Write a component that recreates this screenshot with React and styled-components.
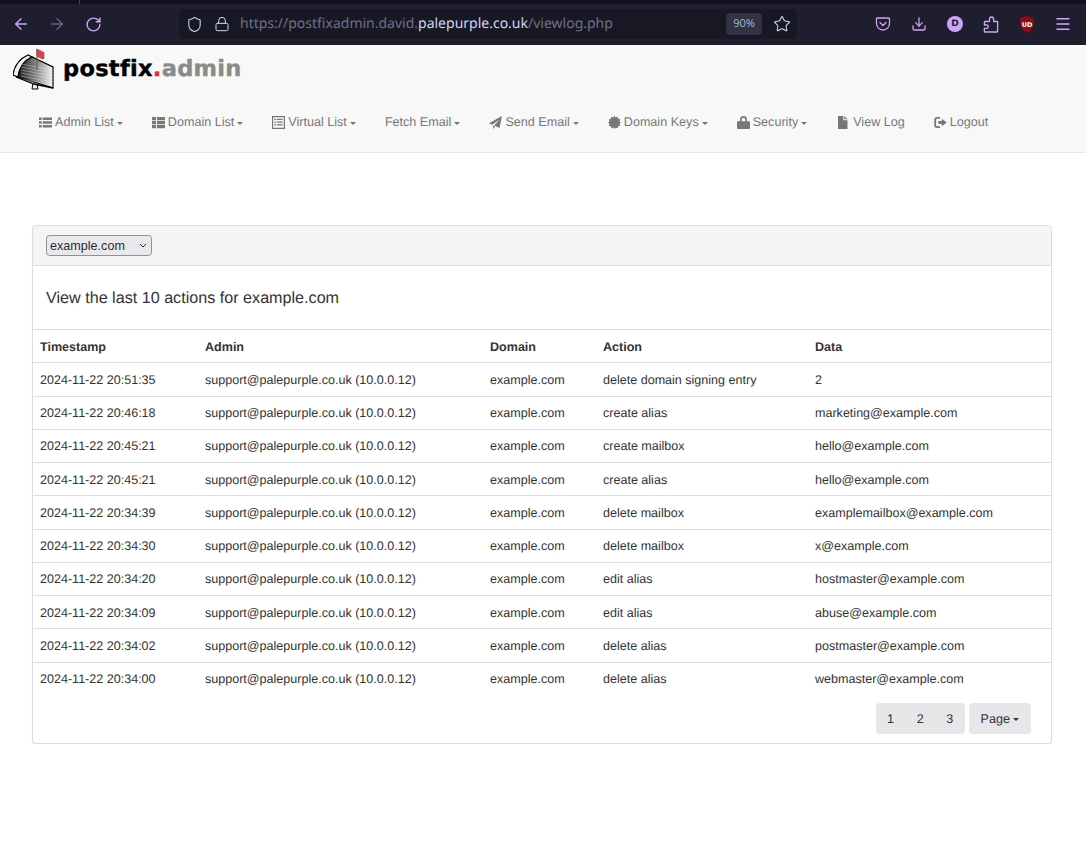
import React from 'react';
import styled, { createGlobalStyle } from 'styled-components';
import { ArrowLeft, ArrowRight, RotateCw, Shield, Lock, Star, Download, Menu } from 'lucide-react';

const GlobalStyle = createGlobalStyle`
  html, body { margin: 0; padding: 0; background: #fff; }
  body {
    font-family: "Liberation Sans", Arial, sans-serif;
    font-size: 12.6px;
    line-height: 18px;
    color: #333;
    text-rendering: geometricPrecision;
  }
`;

const BrowserFrame = styled.div`
  background: #1e1e2e;
  height: 45px;
  display: flex;
  flex-direction: column;
`;

const TabStrip = styled.div`
  height: 4px;
  background: #11111b;
  padding-left: 79px;
`;

const TabDivider = styled.div`
  width: 1px;
  height: 4px;
  background: #45475a;
`;

const Toolbar = styled.div`
  flex: 1;
  display: flex;
  align-items: center;
  padding: 0 5px 1px 3px;
`;

const ToolButton = styled.div`
  width: 36px;
  height: 36px;
  flex: none;
  display: flex;
  align-items: center;
  justify-content: center;
  color: ${p => (p.$dim ? '#6f5b8c' : '#cba6f7')};
`;

const NavGroup = styled.div`
  display: flex;
  margin-right: ${p => p.$gap || 0}px;
`;

const UrlBar = styled.div`
  width: 618px;
  height: 30px;
  flex: none;
  background: #181825;
  border-radius: 4px;
  display: flex;
  align-items: center;
  padding: 0 1px 0 1px;
  box-sizing: border-box;
  margin-right: 68px;
  color: #cdd6f4;
`;

const UrlIcon = styled.span`
  width: 28px;
  display: flex;
  justify-content: center;
  flex: none;
`;

const UrlText = styled.div`
  flex: 1;
  font-family: "Noto Sans", sans-serif;
  font-size: 14px;
  color: #6c7086;
  white-space: nowrap;
  padding-left: 4px;
`;

const UrlHost = styled.span`
  color: #cdd6f4;
`;

const ZoomBadge = styled.div`
  width: 36px;
  height: 22px;
  background: #313244;
  border-radius: 4px;
  font-family: "Noto Sans", sans-serif;
  font-size: 11px;
  line-height: 22px;
  text-align: center;
  color: #a6adc8;
  margin-right: 6px;
`;

const StarButton = styled.span`
  width: 28px;
  display: flex;
  justify-content: center;
`;

const AccountBadge = styled.div`
  width: 16px;
  height: 16px;
  border-radius: 50%;
  background: #cba6f7;
  color: #1e1e2e;
  font-family: "DejaVu Sans", sans-serif;
  font-weight: 700;
  font-size: 9px;
  line-height: 16px;
  text-align: center;
`;

const Navbar = styled.header`
  height: 107px;
  background: #f8f8f8;
  border-bottom: 1px solid #e7e7e7;
  display: flex;
  flex-direction: column;
`;

const Brand = styled.div`
  height: 54px;
  display: flex;
  align-items: flex-start;
  padding: 2px 0 0 13px;
  gap: 8px;
`;

const Wordmark = styled.div`
  font-family: "DejaVu Sans", sans-serif;
  font-weight: 700;
  font-size: 22.5px;
  line-height: 40px;
  letter-spacing: 0.3px;
  color: #000;
  margin-top: 2px;
  -webkit-text-stroke: 0.4px currentColor;
`;

const Dot = styled.span`
  color: #e0312e;
`;

const WordmarkFade = styled.span`
  color: #8a8a8a;
`;

const NavList = styled.nav`
  display: flex;
  align-items: center;
  gap: 29px;
  padding: 12px 0 0 39px;
`;

const NavItem = styled.div`
  display: flex;
  align-items: center;
  color: #777;
  white-space: nowrap;
  height: 18px;
`;

const NavIcon = styled.svg`
  width: 13px;
  height: 13px;
  margin-right: ${p => p.$gap || 3}px;
  fill: #777;
  flex: none;
`;

const Caret = styled.span`
  display: inline-block;
  width: 0;
  height: 0;
  margin-left: 3px;
  margin-top: 2px;
  border-top: 3.6px solid currentColor;
  border-left: 3.6px solid transparent;
  border-right: 3.6px solid transparent;
`;

const Panel = styled.section`
  margin: 72px 34px 0 32px;
  background: #fff;
  border: 1px solid #ddd;
  border-radius: 3.6px;
  box-shadow: 0 1px 1px rgba(0, 0, 0, 0.1);
`;

const PanelHeading = styled.div`
  height: 39px;
  background: #f5f5f5;
  border-bottom: 1px solid #ddd;
  display: flex;
  align-items: center;
  padding-left: 13px;
  border-radius: 3px 3px 0 0;
`;

const SelectWrap = styled.div`
  position: relative;
  width: 106px;
  height: 21px;
`;

const DomainSelect = styled.select`
  appearance: none;
  width: 100%;
  height: 100%;
  font-family: "Liberation Sans", Arial, sans-serif;
  font-size: 12.6px;
  color: #2b2a33;
  background-color: #e9e9ed;
  border: 1px solid #8f8f9d;
  border-radius: 3.6px;
  padding: 0 0 0 3px;
`;

const SelectChevron = styled.svg`
  position: absolute;
  right: 5px;
  top: 8px;
  width: 8px;
  height: 5px;
  pointer-events: none;
`;

const PanelTitle = styled.div`
  height: 63px;
  box-sizing: border-box;
  display: flex;
  align-items: center;
  padding: 1px 0 0 13px;
  font-size: 16.15px;
`;

const LogTable = styled.table`
  width: 100%;
  border-collapse: collapse;
  table-layout: fixed;
  font-size: 12.55px;
`;

const HeadCell = styled.th`
  width: ${p => p.$w};
  text-align: left;
  font-weight: 700;
  height: 33.3px;
  padding: 1px 0 0 7px;
  border-top: 1px solid #ddd;
  border-bottom: 1px solid #ddd;
  box-sizing: border-box;
`;

const Row = styled.tr`
  height: 33.25px;
`;

const Cell = styled.td`
  padding: 1px 0 0 7px;
  border-top: 1px solid #ddd;
  box-sizing: border-box;
  white-space: nowrap;
`;

const PanelFooter = styled.div`
  height: 48.2px;
  display: flex;
  justify-content: flex-end;
  align-items: flex-start;
  gap: 4px;
  padding: 8px 20px 0 0;
  box-sizing: border-box;
`;

const PageGroup = styled.div`
  height: 31px;
  background: #e7e7ea;
  border-radius: 3.6px;
  display: flex;
  align-items: center;
  padding: ${p => (p.$pad ? '0 12px' : '0')};
`;

const PageNumber = styled.span`
  width: 29.6px;
  text-align: center;
`;

const rows = [
  ['2024-11-22 20:51:35', 'delete domain signing entry', '2'],
  ['2024-11-22 20:46:18', 'create alias', 'marketing@example.com'],
  ['2024-11-22 20:45:21', 'create mailbox', 'hello@example.com'],
  ['2024-11-22 20:45:21', 'create alias', 'hello@example.com'],
  ['2024-11-22 20:34:39', 'delete mailbox', 'examplemailbox@example.com'],
  ['2024-11-22 20:34:30', 'delete mailbox', 'x@example.com'],
  ['2024-11-22 20:34:20', 'edit alias', 'hostmaster@example.com'],
  ['2024-11-22 20:34:09', 'edit alias', 'abuse@example.com'],
  ['2024-11-22 20:34:02', 'delete alias', 'postmaster@example.com'],
  ['2024-11-22 20:34:00', 'delete alias', 'webmaster@example.com'],
];

// 12 point burst for the domain keys icon
const burst = Array.from({ length: 24 }, (_, i) => {
  const r = i % 2 ? 5.2 : 6.5;
  const a = (i * Math.PI) / 12;
  return `${(6.5 + r * Math.cos(a)).toFixed(2)} ${(6.5 + r * Math.sin(a)).toFixed(2)}`;
}).join('L');

const icons = {
  list: 'M0 1.500h2.700v2.500H0zM3.700 1.500H13v2.500H3.700zM0 5.250h2.700v2.500H0zM3.700 5.250H13v2.500H3.700zM0 9h2.700v2.500H0zM3.700 9H13v2.500H3.700z',
  th: 'M0 1h4v3.200H0zM5 1h8v3.200H5zM0 5h4v3.200H0zM5 5h8v3.200H5zM0 9h4v3.200H0zM5 9h8v3.200H5z',
  alt: 'M0 0h13v13H0zM1.200 1.200v10.600h10.600V1.200zM2.300 2.800h1.600V4H2.300zM4.800 2.800h5.900V4H4.800zM2.300 5.500h1.600v1.200H2.300zM4.800 5.500h5.900v1.200H4.800zM2.300 8.200h1.600v1.200H2.300zM4.800 8.200h5.900v1.200H4.800z',
  send: 'M13 0 0 7.200l3.300 1.500L10.500 3.500 5.200 9.600l5.300 2.400zM4 9.500V13l2.200-2.500z',
  cert: `M${burst}Z`,
  lock: 'M1 5.200h2V3.500a3.500 3.500 0 0 1 7 0v1.700h2c.5 0 1 .4 1 1V12c0 .6-.5 1-1 1H1c-.5 0-1-.4-1-1V6.200c0-.6.5-1 1-1zM4.700 5.200h3.600V3.500a1.800 1.800 0 0 0-3.600 0z',
  file: 'M2 0h5.300v4.300h4.200V13H2zM8.300 0l3.200 3.300H8.300z',
  out: 'M6 1H3C1.200 1 .3 2.100.3 3.700v5.600C.3 10.900 1.200 12 3 12h3v-1.800H3.200c-.8 0-1.100-.4-1.100-1.100V3.900c0-.7.3-1.100 1.100-1.100H6zM7.800 2.700l5 3.800-5 3.800V8H4.300V5h3.500z',
};

const stripes = [0, 3, 6, 9, 12, 15, 18];

const MailboxLogo = () => (
  <svg width="42" height="45" viewBox="0 0 42 45" style={{ flex: 'none' }}>
    <defs>
      <linearGradient id="boxShade" x1="0" y1="0" x2="1" y2="0">
        <stop offset="0" stopColor="#1c1c1c" />
        <stop offset="0.55" stopColor="#8c8c8c" />
        <stop offset="1" stopColor="#f4f4f4" />
      </linearGradient>
    </defs>
    <path d="M0 28C1 20 6 12 15 8l4 2C10 14 6 22 5 30z" fill="#eee" stroke="#000" strokeWidth="1.200" />
    <path d="M5 30C6 22 10 14 19 10L40 20v21z" fill="url(#boxShade)" stroke="#000" strokeWidth="1.200" />
    {stripes.map(y => (
      <path key={y} d={`M8 ${17 + y}L40 ${23 + y}`} stroke="#fff" strokeOpacity=".45" strokeWidth=".7" />
    ))}
    <path d="M24 2v21" stroke="#666" strokeWidth="1.300" />
    <path d="M24 2l7 3.500V12l-4-1-3-2z" fill="#d9444a" stroke="#8a2a2e" strokeWidth=".5" />
    <path d="M20 36l-1 6h6l-1-5" fill="#eee" stroke="#000" strokeWidth="1" />
    <path d="M3 30l18 7 19 4" fill="none" stroke="#000" strokeWidth="1.300" />
  </svg>
);

const PocketIcon = () => (
  <svg width="16" height="16" viewBox="0 0 16 16" fill="none" stroke="currentColor" strokeWidth="1.300">
    <path d="M2.500 2h11c.6 0 1 .4 1 1v4.500a6.500 6.500 0 0 1-13 0V3c0-.6.4-1 1-1z" />
    <path d="M5 6.500 8 9.500l3-3" strokeLinecap="round" />
  </svg>
);

const PuzzleIcon = () => (
  <svg width="16" height="17" viewBox="0 0 16 17" fill="none" stroke="currentColor" strokeWidth="1.300" strokeLinejoin="round">
    <path d="M6.500 5.500V3.200C6.500 2 7.400 1 8.600 1s2 1 2 2.200v2.300h3.400c.4 0 .6.200.6.600V15.500c0 .3-.3.500-.6.500H2c-.4 0-.6-.2-.6-.6v-3.100h2.200c1 0 1.700-.6 1.700-1.600S4.600 9 3.600 9H1.400V6c0-.3.2-.5.6-.5z" />
  </svg>
);

const UblockIcon = () => (
  <svg width="16" height="17" viewBox="0 0 16 17">
    <path d="M8 0l7 2c0 7 0 11-7 15C1 13 1 9 1 2z" fill="#8b0d13" />
    <text x="8" y="10.500" textAnchor="middle" fontSize="6.500" fontWeight="700" fontFamily="DejaVu Sans" fill="#fff">UD</text>
  </svg>
);

const NavEntry = ({ icon, label, caret, gap }) => (
  <NavItem>
    {icon && (
      <NavIcon viewBox="0 0 13 13" $gap={gap}>
        <path fillRule="evenodd" d={icons[icon]} />
      </NavIcon>
    )}
    {label}
    {caret && <Caret />}
  </NavItem>
);

export default function App() {
  return (
    <>
      <GlobalStyle />
      <BrowserFrame>
        <TabStrip><TabDivider /></TabStrip>
        <Toolbar>
          <NavGroup $gap={68}>
            <ToolButton><ArrowLeft size={18} strokeWidth={1.9} /></ToolButton>
            <ToolButton $dim><ArrowRight size={18} strokeWidth={1.9} /></ToolButton>
            <ToolButton><RotateCw size={17} strokeWidth={2} /></ToolButton>
          </NavGroup>
          <UrlBar>
            <UrlIcon><Shield size={17} strokeWidth={1.5} /></UrlIcon>
            <UrlIcon><Lock size={16} strokeWidth={1.5} /></UrlIcon>
            <UrlText>https://postfixadmin.david.<UrlHost>palepurple.co.uk</UrlHost>/viewlog.php</UrlText>
            <ZoomBadge>90%</ZoomBadge>
            <StarButton><Star size={18} strokeWidth={1.4} /></StarButton>
          </UrlBar>
          <ToolButton><PocketIcon /></ToolButton>
          <ToolButton><Download size={16} strokeWidth={1.9} /></ToolButton>
          <ToolButton><AccountBadge>D</AccountBadge></ToolButton>
          <ToolButton><PuzzleIcon /></ToolButton>
          <ToolButton><UblockIcon /></ToolButton>
          <ToolButton><Menu size={18} strokeWidth={1.8} /></ToolButton>
        </Toolbar>
      </BrowserFrame>

      <Navbar>
        <Brand>
          <MailboxLogo />
          <Wordmark>postfix<Dot>.</Dot><WordmarkFade>admin</WordmarkFade></Wordmark>
        </Brand>
        <NavList>
          <NavEntry icon="list" label="Admin List" caret />
          <NavEntry icon="th" label="Domain List" caret />
          <NavEntry icon="alt" label="Virtual List" caret />
          <NavEntry label="Fetch Email" caret />
          <NavEntry icon="send" label="Send Email" caret />
          <NavEntry icon="cert" label="Domain Keys" caret />
          <NavEntry icon="lock" label="Security" caret />
          <NavEntry icon="file" label="View Log" gap={4} />
          <NavEntry icon="out" label="Logout" />
        </NavList>
      </Navbar>

      <Panel>
        <PanelHeading>
          <SelectWrap>
            <DomainSelect defaultValue="example.com">
              <option>example.com</option>
            </DomainSelect>
            <SelectChevron viewBox="0 0 8 5">
              <path d="M1 1l3 3 3-3" fill="none" stroke="#2b2a33" strokeWidth="1" />
            </SelectChevron>
          </SelectWrap>
        </PanelHeading>
        <PanelTitle>View the last 10 actions for example.com</PanelTitle>
        <LogTable>
          <thead>
            <tr>
              <HeadCell $w="165px">Timestamp</HeadCell>
              <HeadCell $w="285px">Admin</HeadCell>
              <HeadCell $w="113px">Domain</HeadCell>
              <HeadCell $w="212px">Action</HeadCell>
              <HeadCell>Data</HeadCell>
            </tr>
          </thead>
          <tbody>
            {rows.map(([time, action, data], i) => (
              <Row key={i}>
                <Cell>{time}</Cell>
                <Cell>support@palepurple.co.uk (10.0.0.12)</Cell>
                <Cell>example.com</Cell>
                <Cell>{action}</Cell>
                <Cell>{data}</Cell>
              </Row>
            ))}
          </tbody>
        </LogTable>
        <PanelFooter>
          <PageGroup>
            <PageNumber>1</PageNumber>
            <PageNumber>2</PageNumber>
            <PageNumber>3</PageNumber>
          </PageGroup>
          <PageGroup $pad>Page<Caret /></PageGroup>
        </PanelFooter>
      </Panel>
    </>
  );
}
